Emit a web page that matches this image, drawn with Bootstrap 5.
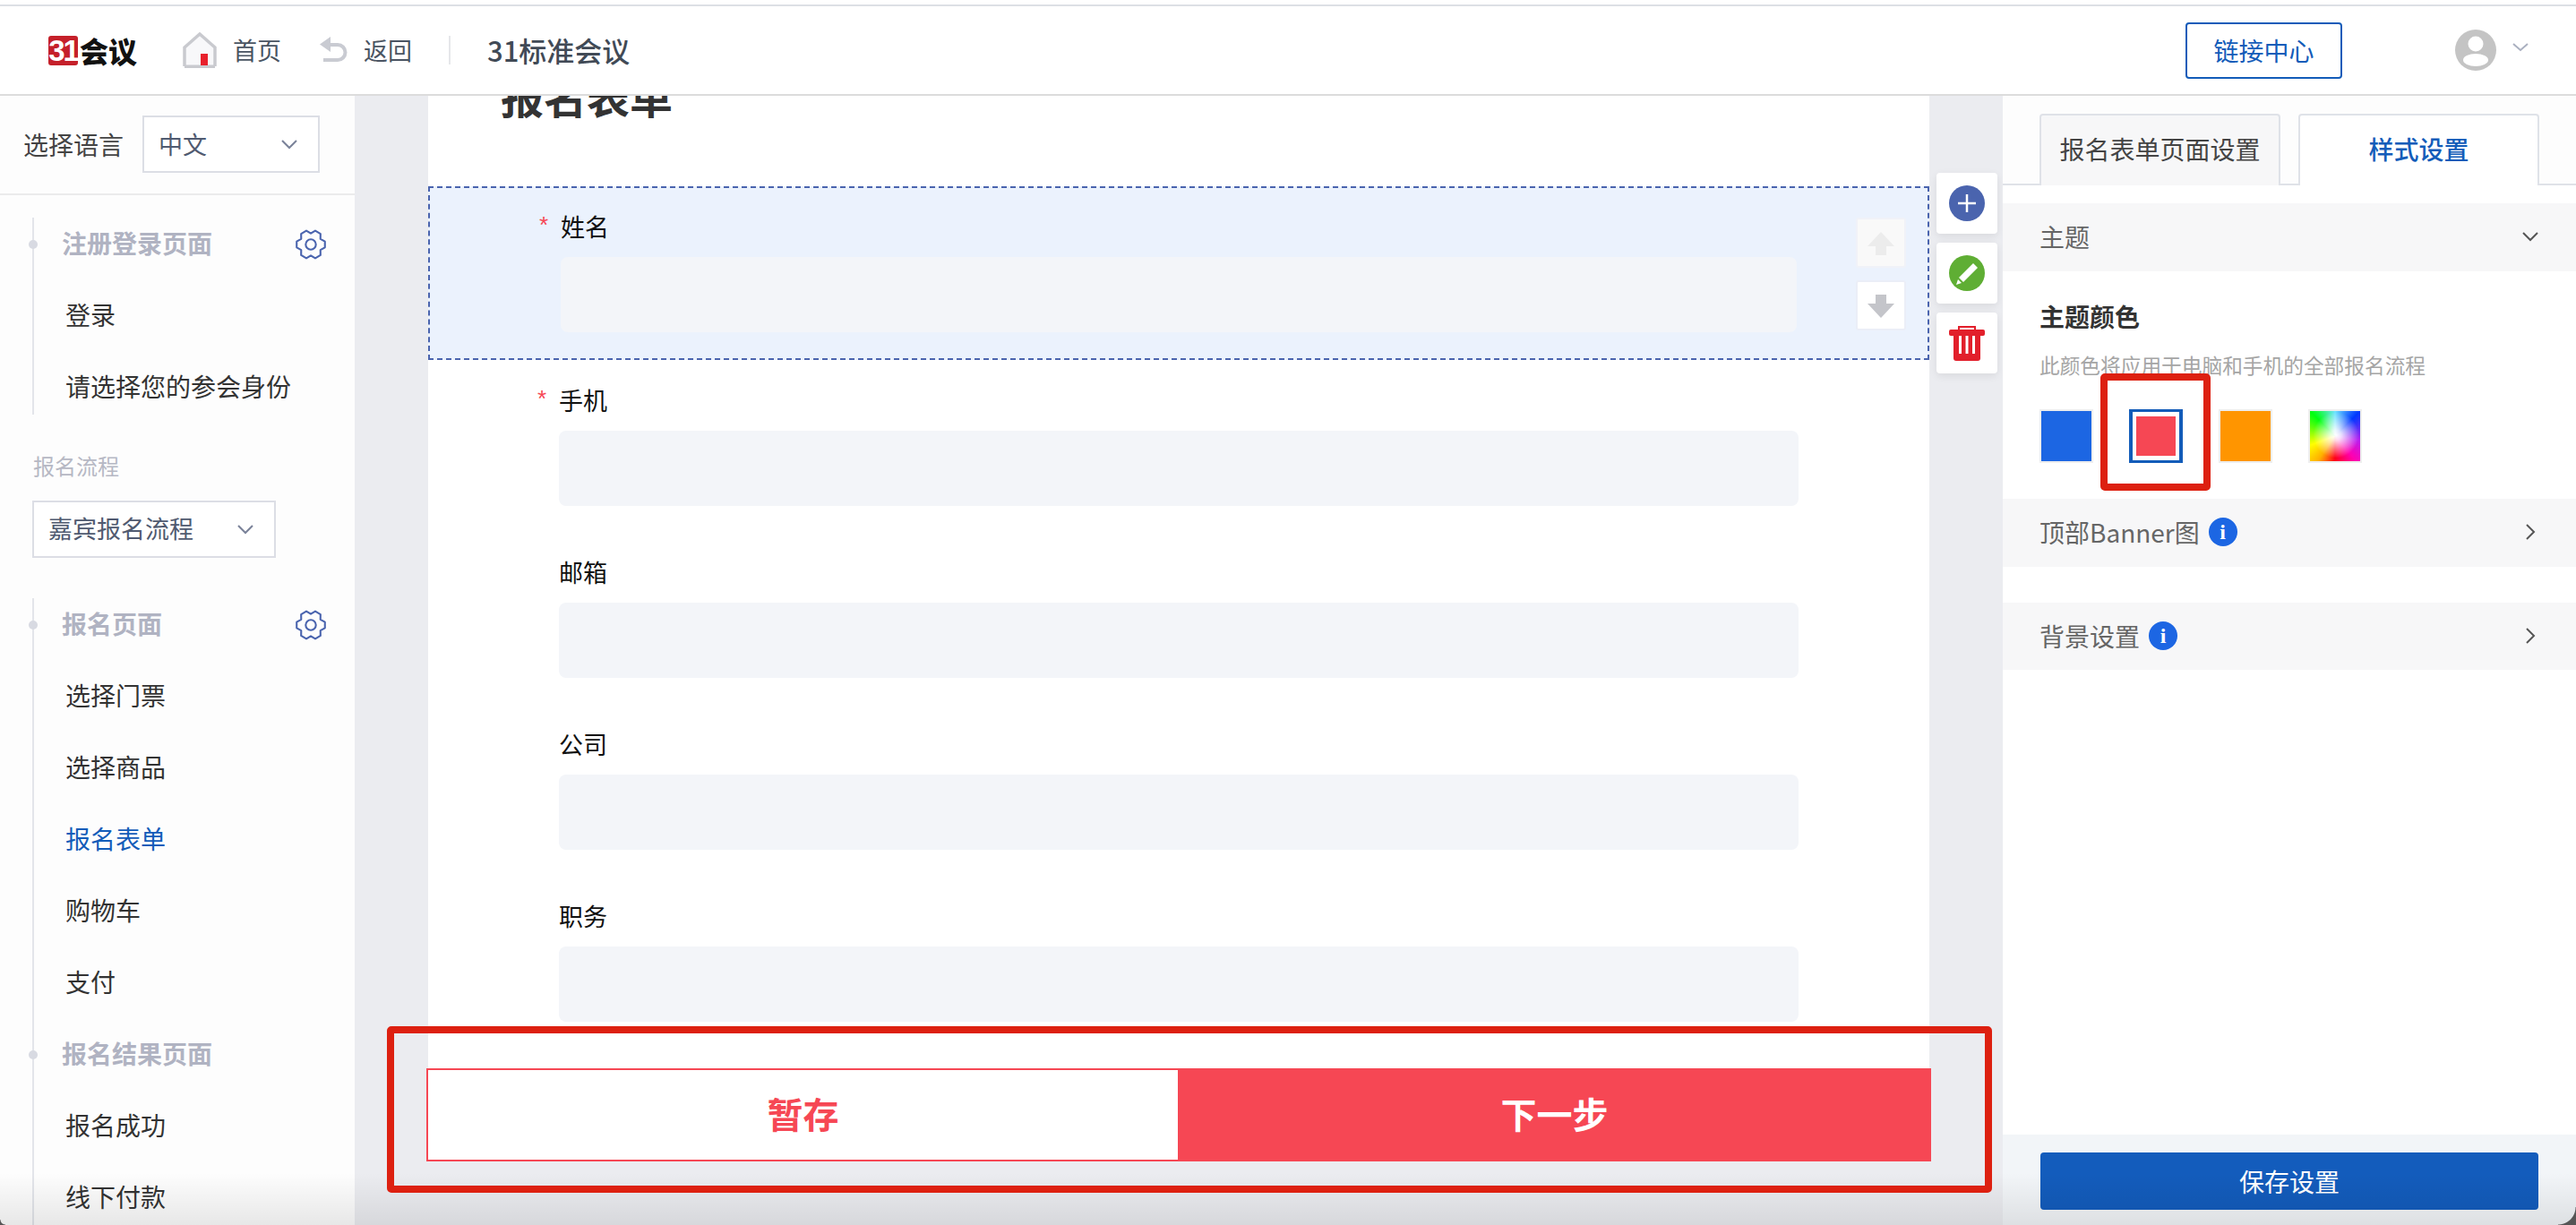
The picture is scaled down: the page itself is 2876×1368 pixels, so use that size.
<!DOCTYPE html>
<html lang="zh-CN">
<head>
  <meta charset="UTF-8">
  <meta name="viewport" content="width=device-width, initial-scale=1.0">
  <title>31会议 - 报名表单</title>
  <link href="https://cdn.jsdelivr.net/npm/bootstrap@5.3.0/dist/css/bootstrap.min.css" rel="stylesheet">
  <style>
    html, body { height: 100%; }
    body {
      font-family: "Noto Sans CJK SC", "Liberation Sans", sans-serif;
      font-size: 28px;
      color: #333;
      height: 1368px;
      overflow: hidden;
      position: relative;
      padding-top: 5px;
      background: #fff;
    }

    /* top bar */
    .top-bar {
      height: 102px;
      border-top: 2px solid #dde0e5;
      border-bottom: 2px solid #dcdcdc;
      padding-left: 54px;
      padding-right: 53px;
      background: #fff;
    }
    .logo-box {
      width: 33px; height: 33px;
      background: #c5202a;
      color: #fff;
      border-radius: 3px;
      font: 700 33px/33px "Liberation Sans", sans-serif;
      letter-spacing: -2px;
      text-align: center;
      overflow: hidden;
    }
    .logo-word { font-size: 32px; font-weight: 900; color: #111; line-height: 33px; letter-spacing: 0; margin-left: 2px; }
    .top-link { font-size: 27px; color: #4a5462; }
    .top-sep { width: 2px; height: 32px; background: #e6e7ea; margin: 0 41px 0 41px; }
    .back-ico { margin-left: 42px; margin-right: 18px; }
    .meeting-name { font-size: 31px; font-weight: 500; color: #414a56; line-height: 40px; }
    .link-center {
      width: 175px; height: 63px;
      border: 2px solid #135cb9;
      border-radius: 4px;
      color: #135cb9;
      font-size: 28px;
      padding: 0;
      line-height: 56px;
      background: #fff;
    }
    .link-center:hover { color: #135cb9; border-color: #135cb9; background: #fff; }

    /* left side */
    .side-left { width: 396px; background: #fdfdfd; overflow: hidden; flex: none; }
    .lang-line { height: 111px; padding: 22px 0 0 26px; border-bottom: 2px solid #ebebec; color: #444; gap: 21px; }
    .pick {
      border: 2px solid #dcdee5;
      border-radius: 0;
      height: 64px;
      font-size: 27px;
      color: #505a70;
      padding: 0 40px 0 16px;
      background-color: #fff;
      background-image: url("data:image/svg+xml,%3csvg xmlns='http://www.w3.org/2000/svg' viewBox='0 0 20 12'%3e%3cpath fill='none' stroke='%237a8299' stroke-width='2' d='M2 2l8 8 8-8'/%3e%3c/svg%3e");
      background-size: 20px 12px;
      background-position: right 22px center;
    }
    .pick-lang { width: 198px; }
    .pick-flow { width: 272px; margin-left: 36px; padding-bottom: 2px; }
    .flow-group { position: relative; margin-left: 36px; }
    .flow-group::before {
      content: "";
      position: absolute;
      left: 0; top: 10px; bottom: 10px;
      width: 2px;
      background: #e3e5ea;
    }
    .flow-group.open-end::before { bottom: -200px; }
    .flow-line { height: 80px; padding: 0 0 4px 37px; display: flex; align-items: center; color: #333; position: relative; }
    .flow-line.is-head { padding-left: 33px; font-weight: 700; color: #b0b3c2; justify-content: space-between; padding-right: 30px; }
    .flow-line.is-head svg { margin-top: 4px; }
    .flow-line.is-head::before {
      content: "";
      position: absolute;
      left: -4px; top: 35px;
      width: 10px; height: 10px;
      border-radius: 50%;
      background: #d8dae2;
    }
    .flow-line.is-active { color: #135cb9; }
    .flow-label { font-size: 24px; color: #b6b8c4; padding-left: 37px; margin-top: 30px; margin-bottom: 22px; line-height: 34px; }

    /* middle */
    .mid-area { flex: 1; background: #ebecf0; padding: 0 0 71px 82px; min-width: 0; }
    .form-sheet { flex: 1; background: #fff; overflow: hidden; min-width: 0; }
    .sheet-title { height: 122px; margin-top: -25px; padding-left: 81px; font-size: 48px; line-height: 48px; font-weight: 700; color: #333; box-sizing: content-box; padding-bottom: 4px; }
    .field-line { height: 192px; padding: 25px 146px 0; position: relative; }
    .field-line.is-picked {
      height: 194px;
      padding: 23px 146px 0;
      background: #ebf2fd;
      border: 2px dashed #4a64ae;
    }
    .field-name { height: 40px; line-height: 40px; margin-bottom: 14px; color: #111; font-size: 27px; }
    .req-star { display: inline-block; width: 24px; margin-left: -24px; color: #f64754; font: 26px/30px "Liberation Sans", sans-serif; vertical-align: 4px; }
    .field-box { height: 84px; background: #f3f5f9; border: 0; border-radius: 8px; }
    .move-btns { position: absolute; right: 24px; top: 33px; gap: 14px; }
    .move-btn { width: 56px; height: 56px; border: 2px solid #ebeef7; border-radius: 3px; background: #fff; padding: 0; }
    .move-btn:disabled { background: #f9f9f9; opacity: 1; border-color: #f0f2f8; }
    .tool-rail { width: 82px; flex: none; padding: 86px 0 0 8px; gap: 10px; }
    .tool-card { width: 68px; height: 68px; background: #fff; border-radius: 4px; box-shadow: 0 3px 10px rgba(0,0,0,.08); }
    .action-line { margin-left: -2px; margin-right: 80px; height: 104px; flex: none; }
    .act-save, .act-next { flex: 1; height: 104px; border-radius: 0; font-size: 40px; font-weight: 700; padding: 0 0 5px; line-height: 1; }
    .act-save { background: #fff; color: #f64754; border: 2px solid #f64754; border-right: 0; }
    .act-next { background: #f64754; color: #fff; border: 2px solid #f64754; }

    /* right side */
    .side-right { width: 640px; flex: none; background: #fff; position: relative; }
    .tab-strip { padding: 20px 0 0 41px; background: #fdfdfd; gap: 20px; height: 100px; border-bottom: 2px solid #dfe2e8; flex-wrap: nowrap; }
    .tab-strip .nav-link {
      width: 269px; height: 80px;
      padding: 0;
      line-height: 74px;
      text-align: center;
      font-size: 28px;
      color: #444;
      background: #f7f7f8;
      border: 2px solid #dfe2e8;
      border-bottom: 0;
      border-radius: 4px 4px 0 0;
      margin: 0;
    }
    .tab-strip .nav-link.active { background: #fff; color: #135cb9; font-weight: 500; }
    .fold-head { padding: 0 41px 2px; background: #f7f7f8; color: #666; justify-content: space-between; align-items: center; display: flex; }
    .fold-head .chev-side { margin-right: 4px; }
    .fold-theme { height: 76px; margin-top: 20px; }
    .fold-banner { height: 76px; }
    .fold-bg { height: 75px; margin-top: 40px; }
    .theme-body { padding: 0 41px; height: 254px; }
    .theme-title { font-weight: 700; color: #333; line-height: 40px; padding-top: 30px; box-sizing: content-box; }
    .theme-hint { font-size: 22.7px; color: #a5a5a5; line-height: 32px; margin-top: 19px; white-space: nowrap; }
    .swatch-line { gap: 40px; margin-top: 33px; }
    .swatch { width: 60px; height: 60px; border: 2px solid #eee; }
    .swatch-blue { background: #1c66e3; }
    .swatch-red { background: #f64754; background-clip: content-box; border: 3px solid #135cb9; padding: 5px 5px; border-left-width: 4px; border-right-width: 4px; padding-left: 4px; padding-right: 4px; }
    .swatch-orange { background: #ff9500; }
    .swatch-any {
      background:
        radial-gradient(circle at 52% 48%, #fff 0, rgba(255,255,255,.85) 14%, rgba(255,255,255,0) 62%),
        conic-gradient(from 0deg, #6fe4ff 0deg, #0038ff 45deg, #b81ef0 100deg, #ff00b0 140deg, #ff0018 180deg, #ffb000 215deg, #ffff00 250deg, #00ff10 315deg, #6fe4ff 360deg);
    }
    .info-dot {
      width: 32px; height: 32px;
      border-radius: 50%;
      background: #1c66e3;
      color: #fff;
      font: 700 24px/32px "Liberation Serif", serif;
      text-align: center;
      margin-left: 10px;
    }
    .save-foot { position: absolute; left: 0; right: 0; bottom: 0; height: 101px; background: #f2f5f8; padding: 20px 42px 0 42px; }
    .save-btn { width: 556px; height: 64px; background: #135cbc; color: #fff; border: 0; border-radius: 4px; font-size: 28px; padding: 0; }
    .save-btn:hover { background: #135cbc; color: #fff; }

    /* red marks laid over the picture */
    .mark-box { position: absolute; border: 8px solid #dd2010; border-radius: 5px; pointer-events: none; z-index: 5; }
    .mark-swatch { left: 2345px; top: 417px; width: 123px; height: 131px; }
    .mark-actions { left: 432px; top: 1146px; width: 1792px; height: 186px; }

    /* window shadow and corners of the screenshot */
    .win-shade { position: absolute; left: 0; right: 0; bottom: 0; height: 58px; background: linear-gradient(rgba(0,0,0,0), rgba(0,0,0,.085)); pointer-events: none; z-index: 4; }
    .win-corner { position: absolute; bottom: 0; z-index: 6; pointer-events: none; }
    .win-corner-r { right: 0; width: 20px; height: 20px; background: radial-gradient(circle at top left, transparent 19px, #555 20px); }
    .win-corner-l { left: 0; width: 6px; height: 6px; background: radial-gradient(circle at top right, transparent 5px, #555 6px); }
  </style>
</head>
<body>
  <svg width="0" height="0" class="position-absolute">
    <symbol id="gear" viewBox="-20 -20 40 40">
      <path fill="none" stroke="#4a64ae" stroke-width="2.2" stroke-linejoin="round" d="M16.6 -3.5L16.6 3.5 11.3 6.5 11.4 12.6 5.25 16.2 0 13 -5.25 16.2 -11.4 12.6 -11.3 6.5 -16.6 3.5 -16.6 -3.5 -11.3 -6.5 -11.4 -12.6 -5.25 -16.2 0 -13 5.25 -16.2 11.4 -12.6 11.3 -6.5Z"/>
      <circle r="6" fill="none" stroke="#4a64ae" stroke-width="2.2"/>
    </symbol>
    <symbol id="chev-r" viewBox="0 0 12 20">
      <path fill="none" stroke="#555" stroke-width="2" d="M2 2l8 8-8 8"/>
    </symbol>
  </svg>

  <header class="top-bar d-flex align-items-center">
    <div class="d-flex align-items-center" style="width:150px">
      <div class="logo-box">31</div>
      <div class="logo-word">会议</div>
    </div>
    <svg width="40" height="40" viewBox="0 0 40 40" class="me-3">
      <path d="M19 1.5L2 17v21h34V17z" fill="#f8f8fa"/>
      <path d="M2 38V17L19 2l17 15v21" fill="none" stroke="#c9cacf" stroke-width="3.5"/>
      <path d="M2 38.5h34" stroke="#c9cacf" stroke-width="4"/>
      <rect x="20" y="24" width="8" height="13" fill="#e8202c"/>
    </svg>
    <span class="top-link">首页</span>
    <svg width="32" height="30" viewBox="0 0 32 30" class="back-ico">
      <path d="M6 9h15a8.500 8.500 0 0 1 0 17H5" fill="none" stroke="#c9cbd2" stroke-width="4"/>
      <path d="M13 0v17L1 8.500z" fill="#c9cbd2"/>
    </svg>
    <span class="top-link">返回</span>
    <span class="top-sep"></span>
    <span class="meeting-name">31标准会议</span>
    <button type="button" class="btn link-center ms-auto">链接中心</button>
    <svg width="46" height="46" viewBox="0 0 46 46" style="margin-left:126px">
      <circle cx="23" cy="23" r="23" fill="#c4c4c4"/>
      <circle cx="23" cy="16" r="8.500" fill="#fff"/>
      <ellipse cx="23" cy="34" rx="14" ry="7" fill="#fff"/>
    </svg>
    <svg width="18" height="10" viewBox="0 0 18 10" style="margin-left:18px;margin-bottom:6px">
      <path d="M1 1l8 7 8-7" fill="none" stroke="#aab0c0" stroke-width="2"/>
    </svg>
  </header>

  <div class="d-flex" style="height:1261px">
    <aside class="side-left">
      <div class="lang-line d-flex align-items-start">
        <span style="line-height:64px">选择语言</span>
        <select class="form-select pick pick-lang"><option>中文</option></select>
      </div>
      <div class="flow-group" style="margin-top:15px">
        <div class="flow-line is-head"><span>注册登录页面</span><svg width="38" height="38"><use href="#gear"/></svg></div>
        <div class="flow-line">登录</div>
        <div class="flow-line">请选择您的参会身份</div>
      </div>
      <div class="flow-label">报名流程</div>
      <select class="form-select pick pick-flow d-block"><option>嘉宾报名流程</option></select>
      <div class="flow-group open-end" style="margin-top:35px">
        <div class="flow-line is-head"><span>报名页面</span><svg width="38" height="38"><use href="#gear"/></svg></div>
        <div class="flow-line">选择门票</div>
        <div class="flow-line">选择商品</div>
        <div class="flow-line is-active">报名表单</div>
        <div class="flow-line">购物车</div>
        <div class="flow-line">支付</div>
        <div class="flow-line is-head"><span>报名结果页面</span></div>
        <div class="flow-line">报名成功</div>
        <div class="flow-line">线下付款</div>
      </div>
    </aside>

    <main class="mid-area d-flex flex-column">
      <div class="d-flex flex-grow-1" style="min-height:0">
        <div class="form-sheet">
          <div class="sheet-title">报名表单</div>
          <div class="field-line is-picked">
            <div class="field-name"><span class="req-star">*</span>姓名</div>
            <input class="form-control field-box" type="text">
            <div class="move-btns d-flex flex-column">
              <button type="button" class="btn move-btn" disabled>
                <svg width="30" height="26" viewBox="0 0 30 26"><path d="M15 0l15 16h-9v10H9V16H0z" fill="#ececec"/></svg>
              </button>
              <button type="button" class="btn move-btn">
                <svg width="30" height="26" viewBox="0 0 30 26"><path d="M15 26L0 10h9V0h12v10h9z" fill="#c4c5ca"/></svg>
              </button>
            </div>
          </div>
          <div class="field-line">
            <div class="field-name"><span class="req-star">*</span>手机</div>
            <input class="form-control field-box" type="text">
          </div>
          <div class="field-line">
            <div class="field-name">邮箱</div>
            <input class="form-control field-box" type="text">
          </div>
          <div class="field-line">
            <div class="field-name">公司</div>
            <input class="form-control field-box" type="text">
          </div>
          <div class="field-line">
            <div class="field-name">职务</div>
            <input class="form-control field-box" type="text">
          </div>
        </div>
        <div class="tool-rail d-flex flex-column">
          <div class="tool-card d-flex align-items-center justify-content-center">
            <svg width="40" height="40" viewBox="0 0 40 40">
              <circle cx="20" cy="20" r="20" fill="#4a64ae"/>
              <path d="M10 20h20M20 10v20" stroke="#fff" stroke-width="2.500"/>
            </svg>
          </div>
          <div class="tool-card d-flex align-items-center justify-content-center">
            <svg width="40" height="40" viewBox="0 0 40 40">
              <circle cx="20" cy="20" r="20" fill="#5fae34"/>
              <path d="M27 9l5 5-16 16-5-5z" fill="#fff"/>
              <path d="M10 27l4 4-6 2z" fill="#fff"/>
            </svg>
          </div>
          <div class="tool-card d-flex align-items-center justify-content-center">
            <svg width="40" height="40" viewBox="0 0 40 40">
              <path d="M10 1h20v5h-2V3H12v3h-2z" fill="#e21f2b"/>
              <rect x="0" y="5" width="40" height="7" rx="2" fill="#e21f2b"/>
              <path d="M5 12h30v25a3 3 0 0 1-3 3H8a3 3 0 0 1-3-3z" fill="#e21f2b"/>
              <path d="M11 12h3v20h-3zM18.500 12h3v20h-3zM26 12h3v20h-3z" fill="#fff"/>
            </svg>
          </div>
        </div>
      </div>
      <div class="action-line d-flex">
        <button type="button" class="btn act-save">暂存</button>
        <button type="button" class="btn act-next">下一步</button>
      </div>
    </main>

    <aside class="side-right">
      <ul class="nav tab-strip">
        <li class="nav-item"><a class="nav-link" href="#">报名表单页面设置</a></li>
        <li class="nav-item"><a class="nav-link active" href="#">样式设置</a></li>
      </ul>
      <div class="fold-head fold-theme">
        <span>主题</span>
        <svg width="20" height="12" viewBox="0 0 20 12"><path d="M2 2l8 8 8-8" fill="none" stroke="#555" stroke-width="2"/></svg>
      </div>
      <div class="theme-body">
        <div class="theme-title">主题颜色</div>
        <div class="theme-hint">此颜色将应用于电脑和手机的全部报名流程</div>
        <div class="swatch-line d-flex">
          <div class="swatch swatch-blue"></div>
          <div class="swatch swatch-red"></div>
          <div class="swatch swatch-orange"></div>
          <div class="swatch swatch-any"></div>
        </div>
      </div>
      <div class="fold-head fold-banner">
        <span class="d-flex align-items-center">顶部Banner图<span class="info-dot">i</span></span>
        <svg width="12" height="20" class="chev-side"><use href="#chev-r"/></svg>
      </div>
      <div class="fold-head fold-bg">
        <span class="d-flex align-items-center">背景设置<span class="info-dot">i</span></span>
        <svg width="12" height="20" class="chev-side"><use href="#chev-r"/></svg>
      </div>
      <div class="save-foot">
        <button type="button" class="btn save-btn">保存设置</button>
      </div>
    </aside>
  </div>

  <div class="mark-box mark-swatch"></div>
  <div class="mark-box mark-actions"></div>
  <div class="win-shade"></div>
  <div class="win-corner win-corner-l"></div>
  <div class="win-corner win-corner-r"></div>

  <script src="https://cdn.jsdelivr.net/npm/bootstrap@5.3.0/dist/js/bootstrap.bundle.min.js"></script>
</body>
</html>
